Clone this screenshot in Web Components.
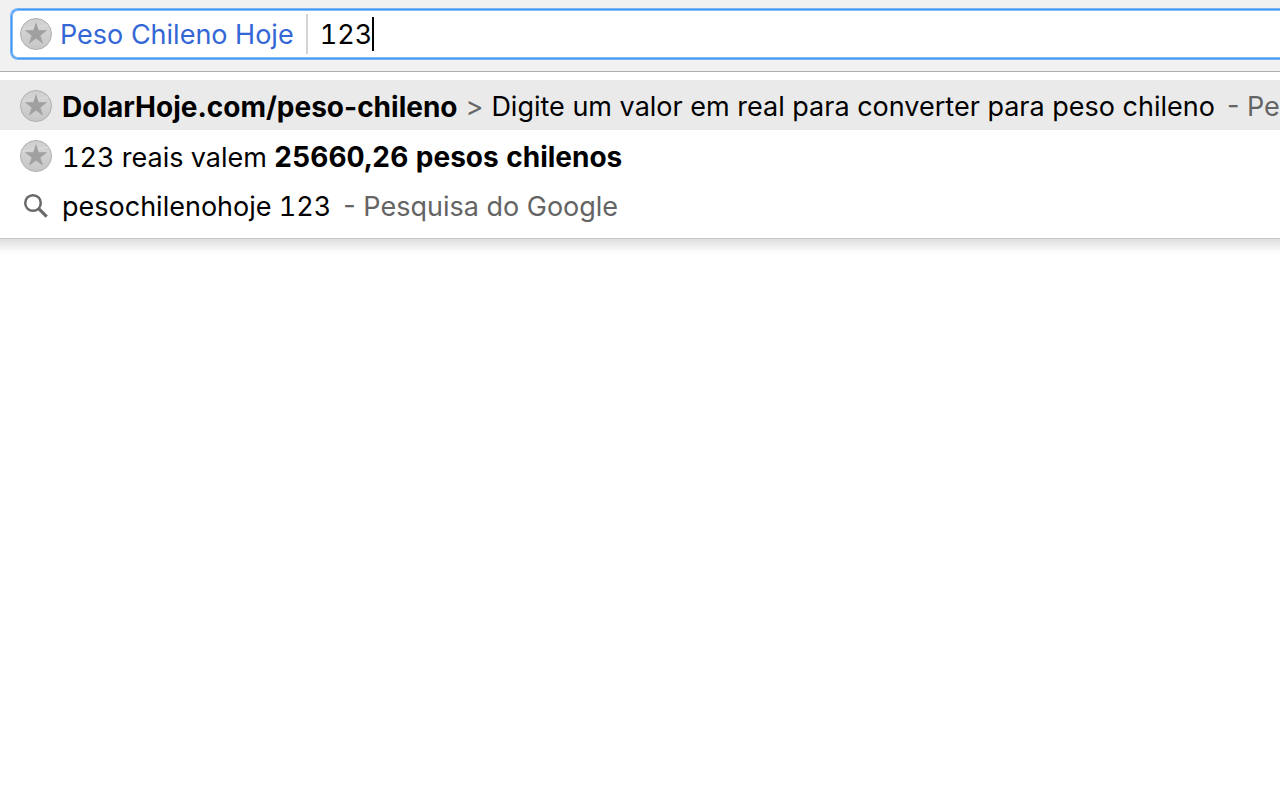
<!DOCTYPE html>
<html lang="pt-BR">
<head>
<meta charset="utf-8">
<meta name="viewport" content="width=device-width, initial-scale=1">
<title>Peso Chileno Hoje</title>
<style>
	body {
		margin: 0;
		background: #fff;
		color: #000;
		font: 27px/50px Inter, "Liberation Sans", sans-serif;
	}

	b { font-size: 28px; }
</style>
</head>
<body>

<omni-bar keyword="Peso Chileno Hoje" value="123"></omni-bar>

<omni-results>
	<omni-result icon="star" selected>
		<b>DolarHoje.com/peso-chileno</b>
		<span slot="separator">&gt;</span>
		<span slot="detail">Digite um valor em real para converter para peso chileno</span>
		<span slot="source">- Pe</span>
	</omni-result>
	<omni-result icon="star" tabular>123 reais valem <b>25660,26 pesos chilenos</b></omni-result>
	<omni-result icon="search" tabular>
		pesochilenohoje 123
		<span slot="source">- Pesquisa do Google</span>
	</omni-result>
</omni-results>

<script>
	// Round extension badge, or a magnifier for plain searches.
	class OmniIcon extends HTMLElement {
		static get observedAttributes () {
			return ['name']
		}

		attributeChangedCallback () {
			this.render()
		}

		constructor () {
			super()
			this.attachShadow({ mode: 'open' })
		}

		render () {
			const art = this.getAttribute('name') === 'search' ? OmniIcon.search() : OmniIcon.star()
			this.shadowRoot.innerHTML = `<style>${OmniIcon.styles()}</style>${art}`
		}

		static styles () {
			return /* css */`
				:host { display: block; flex: none; width: 32px; height: 32px; }
				svg { display: block; }
			`
		}

		static star () {
			return /* html */`
				<svg width="32" height="32" viewBox="0 0 32 32" aria-hidden="true">
					<defs>
						<linearGradient id="face" x1="0" y1="0" x2="0" y2="1">
							<stop offset="0" stop-color="#cfcfcf"/>
							<stop offset=".35" stop-color="#d3d3d3"/>
							<stop offset="1" stop-color="#c6c6c6"/>
						</linearGradient>
					</defs>
					<circle cx="16" cy="16" r="15.5" fill="url(#face)" stroke="#b0b0b0"/>
					<path d="M2 12C8 8 18 10 28 7" fill="none" stroke="#dedede" stroke-width="1.5" opacity=".6"/>
					<path d="M16 4l2.7 8.3h8.7l-7 5.1 2.7 8.4-7.1-5.2-7.1 5.2 2.7-8.4-7-5.1h8.7z" fill="#a0a0a0"/>
				</svg>
			`
		}

		static search () {
			return /* html */`
				<svg width="32" height="32" viewBox="0 0 32 32" fill="none" stroke="#6a6a6a" aria-hidden="true">
					<circle cx="13" cy="13" r="7.8" stroke-width="2.5"/>
					<path d="M18.7 18.7l8 8" stroke-width="3.2"/>
				</svg>
			`
		}
	}

	class OmniBar extends HTMLElement {
		constructor () {
			super()
			this.attachShadow({ mode: 'open' })
			this.shadowRoot.innerHTML = OmniBar.template()
		}

		connectedCallback () {
			this.shadowRoot.querySelector('.keyword').textContent = this.getAttribute('keyword')
			this.shadowRoot.querySelector('input').value = this.getAttribute('value')
		}

		static styles () {
			return /* css */`
				:host {
					display: block;
					padding: 8px 0 11px 10px;
					background: #f1f1f1;
					border-bottom: 1px solid #b0b0b0;
				}
				.ring {
					border: 1px solid #7ab5f2;
					border-right: 0;
					border-radius: 8px 0 0 8px;
				}
				.field {
					display: flex;
					align-items: center;
					height: 48px;
					padding-left: 8px;
					background: #fff;
					border: 1px solid #3d97fa;
					border-right: 0;
					border-radius: 7px 0 0 7px;
					box-shadow: inset 0 1px #8bbdf2, inset 0 -1px #8bbdf2, inset 1px 0 #8bbdf2;
				}
				.keyword {
					padding-top: 2px;
					margin-left: 8px;
					color: #3367d6;
					white-space: nowrap;
				}
				.divider {
					flex: none;
					width: 2px;
					height: 40px;
					margin: 0 12px;
					background: #d4d4d4;
				}
				input {
					field-sizing: content;
					padding: 2px 0 0;
					border: 0;
					outline: 0;
					background: none;
					color: inherit;
					font: inherit;
					font-variant-numeric: tabular-nums;
					line-height: 40px;
					caret-color: transparent;
				}
				.caret {
					width: 2px;
					height: 34px;
					background: #000;
				}
			`
		}

		static html () {
			return /* html */`
				<div class="ring">
					<div class="field">
						<omni-icon name="star"></omni-icon>
						<label class="keyword" for="query"></label>
						<span class="divider"></span>
						<input id="query" type="text" autocomplete="off" spellcheck="false">
						<span class="caret"></span>
					</div>
				</div>
			`
		}

		static template () {
			return `<style>${this.styles()}</style>${this.html()}`
		}
	}

	class OmniResults extends HTMLElement {
		constructor () {
			super()
			this.attachShadow({ mode: 'open' })
			this.shadowRoot.innerHTML = OmniResults.template()
		}

		connectedCallback () {
			this.setAttribute('role', 'listbox')
		}

		static styles () {
			return /* css */`
				:host { display: block; }
				.list {
					padding: 8px 0;
					border-bottom: 1px solid #c8c8c8;
				}
				.shade {
					height: 16px;
					background: linear-gradient(#e0e0e0, #ebebeb 35%, #f9f9f9 70%, #fff);
				}
			`
		}

		static html () {
			return /* html */`
				<div class="list"><slot></slot></div>
				<div class="shade"></div>
			`
		}

		static template () {
			return `<style>${this.styles()}</style>${this.html()}`
		}
	}

	class OmniResult extends HTMLElement {
		constructor () {
			super()
			this.attachShadow({ mode: 'open' })
			this.shadowRoot.innerHTML = OmniResult.template()
		}

		connectedCallback () {
			this.setAttribute('role', 'option')
			this.setAttribute('aria-selected', this.hasAttribute('selected'))
			this.shadowRoot.querySelector('omni-icon').setAttribute('name', this.getAttribute('icon'))
		}

		static styles () {
			return /* css */`
				:host {
					display: flex;
					align-items: center;
					gap: 10px;
					box-sizing: border-box;
					height: 50px;
					padding: 2px 0 0 20px;
					overflow: hidden;
					white-space: nowrap;
				}
				:host([selected]) { background: #eaeaea; }
				:host([tabular]) .main { font-variant-numeric: tabular-nums; }
				.text {
					display: flex;
					gap: 8px;
					padding-top: 2px;
				}
				.source { padding-left: 4px; }
				slot[name="separator"], .source { color: #646464; }
			`
		}

		static html () {
			return /* html */`
				<omni-icon></omni-icon>
				<div class="text">
					<span class="main"><slot></slot></span>
					<slot name="separator"></slot>
					<slot name="detail"></slot>
					<span class="source"><slot name="source"></slot></span>
				</div>
			`
		}

		static template () {
			return `<style>${this.styles()}</style>${this.html()}`
		}
	}

	customElements.define('omni-icon', OmniIcon)
	customElements.define('omni-bar', OmniBar)
	customElements.define('omni-results', OmniResults)
	customElements.define('omni-result', OmniResult)
</script>
</body>
</html>
